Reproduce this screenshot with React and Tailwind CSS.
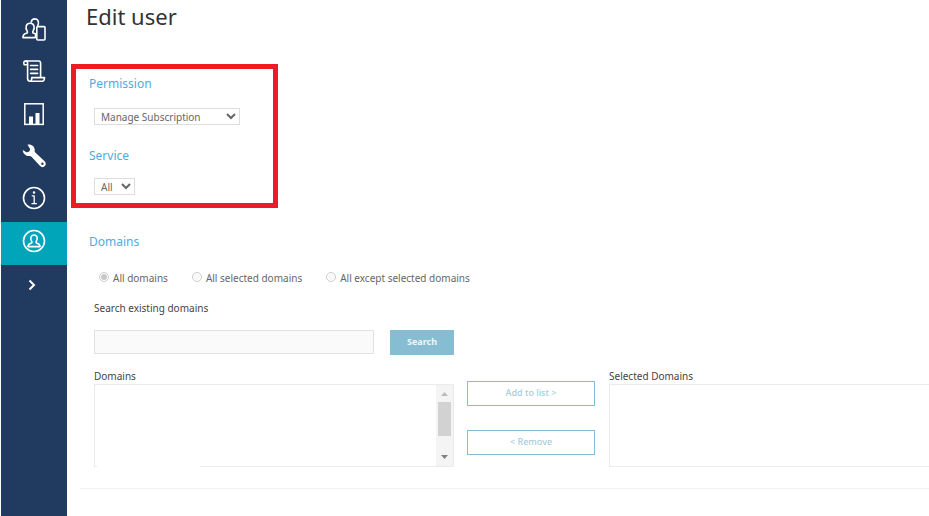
import React, { useState } from "react";
import clsx from "clsx";

const stroke = {
  fill: "none",
  stroke: "currentColor",
  strokeWidth: 1.6,
  strokeLinejoin: "round",
  strokeLinecap: "round",
};

const UsersIcon = () => (
  <svg viewBox="0 0 24 24" className="size-6" {...stroke}>
    <path d="M9.200 4C9.600 1.900 11 .9 12.900.9c2.500 0 3.900 2 3.500 4.600-.1.900-.4 1.600-.8 2.300" />
    <path d="M.9 19.600c0-2.800 1-3.700 3.400-4.300 1.200-.3 1.500-1.300.8-2.300-2-3-1.300-7.700 3-7.700s5 4.700 3 7.700c-.7 1-.4 2 .8 2.300l1.600.5v3.800z" />
    <rect x="14.800" y="8.600" width="8.200" height="13.400" rx="1" />
  </svg>
);

const ScrollIcon = () => (
  <svg viewBox="0 0 24 24" className="size-6" {...stroke}>
    <path d="M5.500 4.700H2.200C1.200 2.200 2.200 1 3.600 1H16.800c1.400 0 1.800 1 1.800 2.200v13.600" />
    <path d="M3.600 1c1.400 0 2 1 2 2.400v14.800c0 2 .8 3 2.400 3h12.200c1.600 0 2.300-1.600 2.300-3.600H9.800c0 2-.4 3.600-1.800 3.600" />
    <path d="M8.600 5.500h7M8.600 9.400h7M8.600 13.400h7" />
  </svg>
);

const ChartIcon = () => (
  <svg viewBox="0 0 24 24" className="size-6">
    <rect x="2.800" y="1.800" width="18.400" height="20.600" fill="none" stroke="currentColor" strokeWidth="1.5" />
    <path fill="currentColor" d="M7 14.500h4V22H7zM13.500 11h4v11h-4z" />
  </svg>
);

const WrenchIcon = () => (
  <svg viewBox="0 0 24 24" className="size-6">
    <path
      fill="currentColor"
      fillRule="evenodd"
      d="M5.500.8c3.600-1 7.500 1.700 7.200 5.700-.1.900 0 1.500.6 2.100l9.300 8.600c3.400 3.300-1 8.200-4.500 4.900L9.500 12.800c-.6-.6-1.200-.7-2-.7C3.700 12.300.7 9.200.8 6l3.600 2.300c2.200.2 3.900-1.400 3.600-3.500zM20.400 18.600a1.200 1.200 0 1 0 0 2.400 1.200 1.200 0 0 0 0-2.400z"
    />
  </svg>
);

const InfoIcon = () => (
  <svg viewBox="0 0 24 24" className="size-6" {...stroke}>
    <circle cx="12" cy="12" r="10.500" />
    <g strokeWidth="1.300">
      <path d="M10.200 9.800h2v7.700M10 17.700h4.400" />
      <circle cx="12" cy="6.600" r=".6" fill="currentColor" />
    </g>
  </svg>
);

const AccountIcon = () => (
  <svg viewBox="0 0 24 24" className="size-6" {...stroke}>
    <circle cx="12" cy="12" r="10.500" />
    <path d="M6 17.600c0-2.200.8-2.900 3-3.400 1-.3 1.200-1 .6-1.900-1.500-2.300-1-6.300 2.400-6.300s3.900 4 2.400 6.300c-.6.9-.4 1.600.6 1.900 2.200.5 3 1.200 3 3.400z" />
  </svg>
);

const navItems = [
  { label: "Users and groups", Icon: UsersIcon },
  { label: "Policies", Icon: ScrollIcon },
  { label: "Reports", Icon: ChartIcon },
  { label: "Tools", Icon: WrenchIcon },
  { label: "Information", Icon: InfoIcon },
  { label: "Administration", Icon: AccountIcon, active: true },
];

const domainScopes = ["All domains", "All selected domains", "All except selected domains"];

function Sidebar() {
  return (
    <nav aria-label="Main" className="ml-px flex w-[66px] shrink-0 flex-col bg-[#213a5f] pt-3 text-white">
      {navItems.map(({ label, Icon, active }) => (
        <a
          key={label}
          href="#"
          aria-label={label}
          aria-current={active ? "page" : undefined}
          className={clsx("flex items-center justify-center pb-[6px]", active ? "h-[43px] bg-[#00a5b9]" : "h-[42px]")}
        >
          <Icon />
        </a>
      ))}
      <button type="button" aria-label="Expand menu" className="flex h-10 items-center justify-center pr-1">
        <svg viewBox="0 0 10 12" className="h-3 w-[10px]" fill="none" stroke="currentColor" strokeWidth="2">
          <path d="M2.500 1.500 7 6l-4.500 4.500" />
        </svg>
      </button>
    </nav>
  );
}

const selectClass = "h-[17px] border border-[#ddd] bg-white pl-[2px] text-[10px] leading-[14px] text-[#666]";
const headingClass = "text-xs leading-4 text-[#4aaede]";
const outlineButton = "h-[25px] w-full border border-[#87bdd3] pb-[2px] text-[9px] font-medium text-[#a5cddd]";

function ListScrollbar() {
  return (
    <div aria-hidden="true" className="flex w-[17px] flex-col items-center bg-[#f4f4f4] py-[7px]">
      <svg viewBox="0 0 7 4" className="h-1 w-[7px]">
        <path d="M0 4 3.500 0 7 4z" fill="#bbb" />
      </svg>
      <div className="mt-[6px] h-[34px] w-[13px] bg-[#d2d2d2]" />
      <svg viewBox="0 0 7 4" className="mt-auto h-1 w-[7px]">
        <path d="M0 0h7L3.500 4z" fill="#808080" />
      </svg>
    </div>
  );
}

export default function App() {
  const [scope, setScope] = useState(domainScopes[0]);

  return (
    <div className="flex min-h-screen bg-white font-['Noto_Sans',sans-serif] text-[10px] text-[#444]">
      <Sidebar />

      <main className="min-w-0 flex-1">
        <h1 className="pt-px pl-[19px] text-[22px] leading-[30px] text-[#333]">Edit user</h1>

        {/* Permission and service */}
        <section className="mt-[33px] ml-1 h-36 w-[207px] border-5 border-[#ed1c24] px-[13px] pt-[7px]">
          <label htmlFor="permission" className={clsx("block", headingClass)}>Permission</label>
          <select id="permission" className={clsx("mt-4 ml-[5px] block w-[146px]", selectClass)}>
            <option>Manage Subscription</option>
          </select>
          <label htmlFor="service" className={clsx("mt-[23px] block", headingClass)}>Service</label>
          <select id="service" className={clsx("mt-[14px] ml-[5px] block w-[41px]", selectClass)}>
            <option>All</option>
          </select>
        </section>

        {/* Domains */}
        <section className="mt-[26px] pl-[27px]">
          <h2 className={clsx("-ml-[5px]", headingClass)}>Domains</h2>

          <div role="radiogroup" aria-label="Domains" className="mt-[19px] flex gap-6 pl-[5px] text-[#666]">
            {domainScopes.map((name) => (
              <label key={name} className="flex items-start gap-1 leading-[18px]">
                <input
                  type="radio"
                  name="scope"
                  disabled
                  checked={scope === name}
                  onChange={() => setScope(name)}
                  className="mt-[3px] size-[10px] appearance-none rounded-full border border-[#ccc] bg-[#f8f8f8] bg-clip-content p-px checked:bg-[#c8c8c8]"
                />
                {name}
              </label>
            ))}
          </div>

          <label htmlFor="search" className="mt-3 block leading-[18px]">Search existing domains</label>
          <div className="mt-[13px] flex gap-4">
            <input id="search" type="text" disabled className="h-6 w-[280px] border border-[#e2e2e2] bg-[#fafafa] px-2" />
            <button type="button" disabled className="h-[25px] w-16 bg-[#87bdd3] pb-[2px] text-[9px] font-bold text-[#eef6fa]">
              Search
            </button>
          </div>

          <div className="mt-[14px] flex">
            <div className="w-[360px] shrink-0">
              <label htmlFor="domains" className="block leading-[15px]">Domains</label>
              <div className="relative flex h-[83px] border border-[#ebebeb]">
                <select id="domains" multiple disabled className="min-w-0 flex-1 bg-white" />
                <ListScrollbar />
                <div className="absolute -bottom-px left-[2px] h-px w-[103px] bg-white" />
              </div>
            </div>
            <div className="ml-[13px] flex w-32 shrink-0 flex-col gap-6 pt-3">
              <button type="button" disabled className={outlineButton}>Add to list &gt;</button>
              <button type="button" disabled className={outlineButton}>&lt; Remove</button>
            </div>
            <div className="ml-[14px] min-w-0 flex-1">
              <label htmlFor="selected" className="block leading-[15px]">Selected Domains</label>
              <select id="selected" multiple disabled className="block h-[83px] w-full border border-r-0 border-[#ebebeb] bg-white" />
            </div>
          </div>
        </section>

        <hr className="mt-[21px] ml-[13px] border-[#f2f2f2]" />
      </main>
    </div>
  );
}
